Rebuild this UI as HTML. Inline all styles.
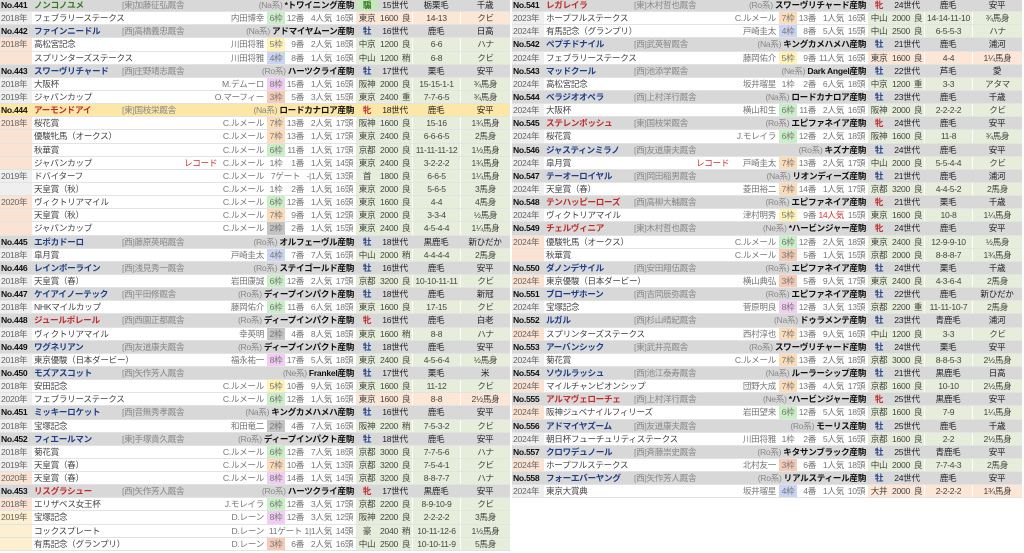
<!DOCTYPE html>
<html><head><meta charset="utf-8">
<style>
*{margin:0;padding:0;box-sizing:border-box}
body{width:1024px;height:553px;overflow:hidden;background:#fff;font-family:"Liberation Sans","Noto Sans CJK JP",sans-serif;font-size:8.6px;color:#555;letter-spacing:-0.3px}
.t{position:absolute;top:-1px;width:510px}
.r{display:flex;height:13.15px;line-height:12.5px;border-bottom:1px solid #e3e3e3;white-space:nowrap;overflow:hidden}
.r>div{overflow:hidden}
.y{width:32px;background:#efefef;color:#666;padding-left:1px}
.y.o{background:#fbe3d3}
.n{width:235px;display:flex;justify-content:space-between;padding:0 3px 0 2px;color:#444}
.n i{font-style:normal;color:#c33;position:absolute;margin-left:150px}
.n em{font-style:normal;color:#777}
.w{width:18px;text-align:center;color:#777}
.b{width:19px;text-align:right;color:#777}
.p{width:28px;text-align:right;color:#777}
.h{width:23px;text-align:right;color:#777;padding-right:2px}
.z{display:flex;background:#e6eedb;border-left:1px solid #fff}
.z.dt{background:#fce6d6}
.c{width:22px;text-align:center;color:#444}
.d{width:22px;text-align:center;color:#444}
.k{width:12px;text-align:center;color:#444}
.s{width:48px;text-align:center;color:#444;border-left:1px solid #fff}
.m{width:50px;text-align:center;color:#444;border-left:1px solid #fff}
.H{background:#d8d8d8}
.H.A{background:#fce7a6}
.no{width:32px;font-weight:bold;color:#111;padding-left:1px}
.hn{width:90px;font-weight:bold;padding-left:2px}
.M{color:#1d3f8a}.F{color:#c42a2a}.G{color:#2e7d1e}
.tr{flex:1;color:#888;position:relative}
.tr b{font-weight:normal;position:absolute;left:-18px}
.sr{text-align:right;padding-right:2px;color:#111;font-weight:bold}
.sr span{font-weight:normal;color:#888}
.sx{width:22px;text-align:center;font-weight:bold}
.g{width:34px;text-align:center;color:#222}
.co{width:48px;text-align:center;color:#222}
.bp{width:50px;text-align:center;color:#222}
.hz{display:flex}
.w1{background:#fff}.w2{background:#c4c4c4}.w3{background:#f6cbb5}.w4{background:#c9d5f2}.w5{background:#fff3b5}.w6{background:#c9efc6}.w7{background:#fbdcb8}.w8{background:#f1cdf4}
.gx{width:37px;text-align:center;color:#777}
</style></head><body>

<div class="t" style="left:0">
<div class="r H"><div class="no">No.441</div><div class="hn G">ノンコノユメ</div><div class="tr">[東]加藤征弘厩舎</div><div class="sr"><span>(Na系)</span> *トワイニング産駒</div><div class="hz"><div class="sx G" style="background:#c8e6c0">騸</div><div class="g">15世代</div><div class="co">栃栗毛</div><div class="bp">千歳</div></div></div>
<div class="r"><div class="y">2018年</div><div class="n">フェブラリーステークス<em>内田博幸</em></div><div class="w w6">6枠</div><div class="b">12番</div><div class="p">4人気</div><div class="h">16頭</div><div class="z dt"><div class="c">東京</div><div class="d">1600</div><div class="k">良</div><div class="s">14-13</div><div class="m">クビ</div></div></div>
<div class="r H"><div class="no">No.442</div><div class="hn M">ファインニードル</div><div class="tr">[西]高橋義忠厩舎</div><div class="sr"><span>(Na系)</span> アドマイヤムーン産駒</div><div class="hz"><div class="sx M">牡</div><div class="g">16世代</div><div class="co">鹿毛</div><div class="bp">日高</div></div></div>
<div class="r"><div class="y o">2018年</div><div class="n">高松宮記念<em>川田将雅</em></div><div class="w w5">5枠</div><div class="b">9番</div><div class="p">2人気</div><div class="h">18頭</div><div class="z"><div class="c">中京</div><div class="d">1200</div><div class="k">良</div><div class="s">6-6</div><div class="m">ハナ</div></div></div>
<div class="r"><div class="y o"></div><div class="n">スプリンターズステークス<em>川田将雅</em></div><div class="w w4">4枠</div><div class="b">8番</div><div class="p">1人気</div><div class="h">16頭</div><div class="z"><div class="c">中山</div><div class="d">1200</div><div class="k">稍</div><div class="s">6-8</div><div class="m">クビ</div></div></div>
<div class="r H"><div class="no">No.443</div><div class="hn M">スワーヴリチャード</div><div class="tr">[西]庄野靖志厩舎</div><div class="sr"><span>(Ro系)</span> ハーツクライ産駒</div><div class="hz"><div class="sx M">牡</div><div class="g">17世代</div><div class="co">栗毛</div><div class="bp">安平</div></div></div>
<div class="r"><div class="y">2018年</div><div class="n">大阪杯<em>M.デムーロ</em></div><div class="w w8">8枠</div><div class="b">15番</div><div class="p">1人気</div><div class="h">16頭</div><div class="z"><div class="c">阪神</div><div class="d">2000</div><div class="k">良</div><div class="s">15-15-1-1</div><div class="m">¾馬身</div></div></div>
<div class="r"><div class="y">2019年</div><div class="n">ジャパンカップ<em>O.マーフィー</em></div><div class="w w3">3枠</div><div class="b">5番</div><div class="p">3人気</div><div class="h">15頭</div><div class="z"><div class="c">東京</div><div class="d">2400</div><div class="k">重</div><div class="s">7-7-6-5</div><div class="m">¾馬身</div></div></div>
<div class="r H A"><div class="no">No.444</div><div class="hn F">アーモンドアイ</div><div class="tr">[東]国枝栄厩舎</div><div class="sr"><span>(Na系)</span> ロードカナロア産駒</div><div class="hz"><div class="sx F">牝</div><div class="g">18世代</div><div class="co">鹿毛</div><div class="bp">安平</div></div></div>
<div class="r"><div class="y o">2018年</div><div class="n">桜花賞<em>C.ルメール</em></div><div class="w w7">7枠</div><div class="b">13番</div><div class="p">2人気</div><div class="h">17頭</div><div class="z"><div class="c">阪神</div><div class="d">1600</div><div class="k">良</div><div class="s">15-16</div><div class="m">1¾馬身</div></div></div>
<div class="r"><div class="y o"></div><div class="n">優駿牝馬（オークス）<em>C.ルメール</em></div><div class="w w7">7枠</div><div class="b">13番</div><div class="p">1人気</div><div class="h">17頭</div><div class="z"><div class="c">東京</div><div class="d">2400</div><div class="k">良</div><div class="s">6-6-6-5</div><div class="m">2馬身</div></div></div>
<div class="r"><div class="y o"></div><div class="n">秋華賞<em>C.ルメール</em></div><div class="w w6">6枠</div><div class="b">11番</div><div class="p">1人気</div><div class="h">17頭</div><div class="z"><div class="c">京都</div><div class="d">2000</div><div class="k">良</div><div class="s">11-11-11-12</div><div class="m">1½馬身</div></div></div>
<div class="r"><div class="y o"></div><div class="n">ジャパンカップ<i>レコード</i><em>C.ルメール</em></div><div class="w w1">1枠</div><div class="b">1番</div><div class="p">1人気</div><div class="h">14頭</div><div class="z"><div class="c">東京</div><div class="d">2400</div><div class="k">良</div><div class="s">3-2-2-2</div><div class="m">1¾馬身</div></div></div>
<div class="r"><div class="y">2019年</div><div class="n">ドバイターフ<em>C.ルメール</em></div><div class="gx">7ゲート</div><div class="p">-|1人気</div><div class="h">13頭</div><div class="z"><div class="c">首</div><div class="d">1800</div><div class="k">良</div><div class="s">6-6-5</div><div class="m">1¼馬身</div></div></div>
<div class="r"><div class="y"></div><div class="n">天皇賞（秋）<em>C.ルメール</em></div><div class="w w1">1枠</div><div class="b">2番</div><div class="p">1人気</div><div class="h">16頭</div><div class="z"><div class="c">東京</div><div class="d">2000</div><div class="k">良</div><div class="s">5-6-5</div><div class="m">3馬身</div></div></div>
<div class="r"><div class="y o">2020年</div><div class="n">ヴィクトリアマイル<em>C.ルメール</em></div><div class="w w6">6枠</div><div class="b">12番</div><div class="p">1人気</div><div class="h">16頭</div><div class="z"><div class="c">東京</div><div class="d">1600</div><div class="k">良</div><div class="s">4-4</div><div class="m">4馬身</div></div></div>
<div class="r"><div class="y o"></div><div class="n">天皇賞（秋）<em>C.ルメール</em></div><div class="w w7">7枠</div><div class="b">9番</div><div class="p">1人気</div><div class="h">12頭</div><div class="z"><div class="c">東京</div><div class="d">2000</div><div class="k">良</div><div class="s">3-3-4</div><div class="m">½馬身</div></div></div>
<div class="r"><div class="y o"></div><div class="n">ジャパンカップ<em>C.ルメール</em></div><div class="w w2">2枠</div><div class="b">2番</div><div class="p">1人気</div><div class="h">15頭</div><div class="z"><div class="c">東京</div><div class="d">2400</div><div class="k">良</div><div class="s">4-5-4-4</div><div class="m">1¼馬身</div></div></div>
<div class="r H"><div class="no">No.445</div><div class="hn M">エポカドーロ</div><div class="tr">[西]藤原英昭厩舎</div><div class="sr"><span>(Ro系)</span> オルフェーヴル産駒</div><div class="hz"><div class="sx M">牡</div><div class="g">18世代</div><div class="co">黒鹿毛</div><div class="bp">新ひだか</div></div></div>
<div class="r"><div class="y">2018年</div><div class="n">皐月賞<em>戸崎圭太</em></div><div class="w w4">4枠</div><div class="b">7番</div><div class="p">7人気</div><div class="h">16頭</div><div class="z"><div class="c">中山</div><div class="d">2000</div><div class="k">稍</div><div class="s">4-4-4-4</div><div class="m">2馬身</div></div></div>
<div class="r H"><div class="no">No.446</div><div class="hn M">レインボーライン</div><div class="tr">[西]浅見秀一厩舎</div><div class="sr"><span>(Ro系)</span> ステイゴールド産駒</div><div class="hz"><div class="sx M">牡</div><div class="g">16世代</div><div class="co">鹿毛</div><div class="bp">安平</div></div></div>
<div class="r"><div class="y">2018年</div><div class="n">天皇賞（春）<em>岩田康誠</em></div><div class="w w6">6枠</div><div class="b">12番</div><div class="p">2人気</div><div class="h">17頭</div><div class="z"><div class="c">京都</div><div class="d">3200</div><div class="k">良</div><div class="s">10-10-11-11</div><div class="m">クビ</div></div></div>
<div class="r H"><div class="no">No.447</div><div class="hn M">ケイアイノーテック</div><div class="tr">[西]平田修厩舎</div><div class="sr"><span>(Ro系)</span> ディープインパクト産駒</div><div class="hz"><div class="sx M">牡</div><div class="g">18世代</div><div class="co">鹿毛</div><div class="bp">新冠</div></div></div>
<div class="r"><div class="y">2018年</div><div class="n">NHKマイルカップ<em>藤岡佑介</em></div><div class="w w6">6枠</div><div class="b">11番</div><div class="p">6人気</div><div class="h">18頭</div><div class="z"><div class="c">東京</div><div class="d">1600</div><div class="k">良</div><div class="s">17-15</div><div class="m">クビ</div></div></div>
<div class="r H"><div class="no">No.448</div><div class="hn F">ジュールポレール</div><div class="tr">[西]西園正都厩舎</div><div class="sr"><span>(Ro系)</span> ディープインパクト産駒</div><div class="hz"><div class="sx F">牝</div><div class="g">16世代</div><div class="co">鹿毛</div><div class="bp">白老</div></div></div>
<div class="r"><div class="y">2018年</div><div class="n">ヴィクトリアマイル<em>幸英明</em></div><div class="w w2">2枠</div><div class="b">4番</div><div class="p">8人気</div><div class="h">18頭</div><div class="z"><div class="c">東京</div><div class="d">1600</div><div class="k">稍</div><div class="s">8-8</div><div class="m">ハナ</div></div></div>
<div class="r H"><div class="no">No.449</div><div class="hn M">ワグネリアン</div><div class="tr">[西]友道康夫厩舎</div><div class="sr"><span>(Ro系)</span> ディープインパクト産駒</div><div class="hz"><div class="sx M">牡</div><div class="g">18世代</div><div class="co">鹿毛</div><div class="bp">安平</div></div></div>
<div class="r"><div class="y">2018年</div><div class="n">東京優駿（日本ダービー）<em>福永祐一</em></div><div class="w w8">8枠</div><div class="b">17番</div><div class="p">5人気</div><div class="h">18頭</div><div class="z"><div class="c">東京</div><div class="d">2400</div><div class="k">良</div><div class="s">4-5-6-4</div><div class="m">½馬身</div></div></div>
<div class="r H"><div class="no">No.450</div><div class="hn M">モズアスコット</div><div class="tr"><b>(外)</b>[西]矢作芳人厩舎</div><div class="sr"><span>(Ne系)</span> Frankel産駒</div><div class="hz"><div class="sx M">牡</div><div class="g">17世代</div><div class="co">栗毛</div><div class="bp">米</div></div></div>
<div class="r"><div class="y">2018年</div><div class="n">安田記念<em>C.ルメール</em></div><div class="w w5">5枠</div><div class="b">10番</div><div class="p">9人気</div><div class="h">16頭</div><div class="z"><div class="c">東京</div><div class="d">1600</div><div class="k">良</div><div class="s">11-12</div><div class="m">クビ</div></div></div>
<div class="r"><div class="y">2020年</div><div class="n">フェブラリーステークス<em>C.ルメール</em></div><div class="w w6">6枠</div><div class="b">12番</div><div class="p">1人気</div><div class="h">16頭</div><div class="z dt"><div class="c">東京</div><div class="d">1600</div><div class="k">良</div><div class="s">8-8</div><div class="m">2½馬身</div></div></div>
<div class="r H"><div class="no">No.451</div><div class="hn M">ミッキーロケット</div><div class="tr">[西]音無秀孝厩舎</div><div class="sr"><span>(Na系)</span> キングカメハメハ産駒</div><div class="hz"><div class="sx M">牡</div><div class="g">16世代</div><div class="co">鹿毛</div><div class="bp">安平</div></div></div>
<div class="r"><div class="y">2018年</div><div class="n">宝塚記念<em>和田竜二</em></div><div class="w w2">2枠</div><div class="b">4番</div><div class="p">7人気</div><div class="h">16頭</div><div class="z"><div class="c">阪神</div><div class="d">2200</div><div class="k">稍</div><div class="s">7-5-3-2</div><div class="m">クビ</div></div></div>
<div class="r H"><div class="no">No.452</div><div class="hn M">フィエールマン</div><div class="tr">[東]手塚貴久厩舎</div><div class="sr"><span>(Ro系)</span> ディープインパクト産駒</div><div class="hz"><div class="sx M">牡</div><div class="g">18世代</div><div class="co">鹿毛</div><div class="bp">安平</div></div></div>
<div class="r"><div class="y">2018年</div><div class="n">菊花賞<em>C.ルメール</em></div><div class="w w6">6枠</div><div class="b">12番</div><div class="p">7人気</div><div class="h">18頭</div><div class="z"><div class="c">京都</div><div class="d">3000</div><div class="k">良</div><div class="s">7-7-5-6</div><div class="m">ハナ</div></div></div>
<div class="r"><div class="y">2019年</div><div class="n">天皇賞（春）<em>C.ルメール</em></div><div class="w w7">7枠</div><div class="b">10番</div><div class="p">1人気</div><div class="h">13頭</div><div class="z"><div class="c">京都</div><div class="d">3200</div><div class="k">良</div><div class="s">7-5-4-1</div><div class="m">クビ</div></div></div>
<div class="r"><div class="y o">2020年</div><div class="n">天皇賞（春）<em>C.ルメール</em></div><div class="w w8">8枠</div><div class="b">14番</div><div class="p">1人気</div><div class="h">14頭</div><div class="z"><div class="c">京都</div><div class="d">3200</div><div class="k">良</div><div class="s">8-8-7-7</div><div class="m">ハナ</div></div></div>
<div class="r H"><div class="no">No.453</div><div class="hn F">リスグラシュー</div><div class="tr">[西]矢作芳人厩舎</div><div class="sr"><span>(Ro系)</span> ハーツクライ産駒</div><div class="hz"><div class="sx F">牝</div><div class="g">17世代</div><div class="co">黒鹿毛</div><div class="bp">安平</div></div></div>
<div class="r"><div class="y o">2018年</div><div class="n">エリザベス女王杯<em>J.モレイラ</em></div><div class="w w6">6枠</div><div class="b">12番</div><div class="p">3人気</div><div class="h">17頭</div><div class="z"><div class="c">京都</div><div class="d">2200</div><div class="k">良</div><div class="s">8-9-10-9</div><div class="m">クビ</div></div></div>
<div class="r"><div class="y o" style="background:#fdf0d0">2019年</div><div class="n">宝塚記念<em>D.レーン</em></div><div class="w w8">8枠</div><div class="b">12番</div><div class="p">3人気</div><div class="h">12頭</div><div class="z"><div class="c">阪神</div><div class="d">2200</div><div class="k">良</div><div class="s">2-2-2-2</div><div class="m">3馬身</div></div></div>
<div class="r"><div class="y o" style="background:#fdf0d0"></div><div class="n">コックスプレート<em>D.レーン</em></div><div class="gx">11ゲート</div><div class="p">1|1人気</div><div class="h">14頭</div><div class="z"><div class="c">豪</div><div class="d">2040</div><div class="k">稍</div><div class="s">10-11-12-6</div><div class="m">1½馬身</div></div></div>
<div class="r"><div class="y o" style="background:#fdf0d0"></div><div class="n">有馬記念（グランプリ）<em>D.レーン</em></div><div class="w w3">3枠</div><div class="b">6番</div><div class="p">2人気</div><div class="h">16頭</div><div class="z"><div class="c">中山</div><div class="d">2500</div><div class="k">良</div><div class="s">10-10-11-9</div><div class="m">5馬身</div></div></div>
</div>

<div class="t" style="left:512px">
<div class="r H"><div class="no">No.541</div><div class="hn F">レガレイラ</div><div class="tr">[東]木村哲也厩舎</div><div class="sr"><span>(Ro系)</span> スワーヴリチャード産駒</div><div class="hz"><div class="sx F">牝</div><div class="g">24世代</div><div class="co">鹿毛</div><div class="bp">安平</div></div></div>
<div class="r"><div class="y">2023年</div><div class="n">ホープフルステークス<em>C.ルメール</em></div><div class="w w7">7枠</div><div class="b">13番</div><div class="p">1人気</div><div class="h">16頭</div><div class="z"><div class="c">中山</div><div class="d">2000</div><div class="k">良</div><div class="s">14-14-11-10</div><div class="m">¾馬身</div></div></div>
<div class="r"><div class="y">2024年</div><div class="n">有馬記念（グランプリ）<em>戸崎圭太</em></div><div class="w w4">4枠</div><div class="b">8番</div><div class="p">5人気</div><div class="h">15頭</div><div class="z"><div class="c">中山</div><div class="d">2500</div><div class="k">良</div><div class="s">6-5-5-3</div><div class="m">ハナ</div></div></div>
<div class="r H"><div class="no">No.542</div><div class="hn M">ペプチドナイル</div><div class="tr">[西]武英智厩舎</div><div class="sr"><span>(Na系)</span> キングカメハメハ産駒</div><div class="hz"><div class="sx M">牡</div><div class="g">21世代</div><div class="co">鹿毛</div><div class="bp">浦河</div></div></div>
<div class="r"><div class="y">2024年</div><div class="n">フェブラリーステークス<em>藤岡佑介</em></div><div class="w w5">5枠</div><div class="b">9番</div><div class="p">11人気</div><div class="h">16頭</div><div class="z dt"><div class="c">東京</div><div class="d">1600</div><div class="k">良</div><div class="s">4-4</div><div class="m">1¼馬身</div></div></div>
<div class="r H"><div class="no">No.543</div><div class="hn M">マッドクール</div><div class="tr"><b>(外)</b>[西]池添学厩舎</div><div class="sr"><span>(Ne系)</span> Dark Angel産駒</div><div class="hz"><div class="sx M">牡</div><div class="g">22世代</div><div class="co">芦毛</div><div class="bp">愛</div></div></div>
<div class="r"><div class="y">2024年</div><div class="n">高松宮記念<em>坂井瑠星</em></div><div class="w w1">1枠</div><div class="b">2番</div><div class="p">6人気</div><div class="h">18頭</div><div class="z"><div class="c">中京</div><div class="d">1200</div><div class="k">重</div><div class="s">3-3</div><div class="m">アタマ</div></div></div>
<div class="r H"><div class="no">No.544</div><div class="hn M">ベラジオオペラ</div><div class="tr">[西]上村洋行厩舎</div><div class="sr"><span>(Na系)</span> ロードカナロア産駒</div><div class="hz"><div class="sx M">牡</div><div class="g">23世代</div><div class="co">鹿毛</div><div class="bp">千歳</div></div></div>
<div class="r"><div class="y">2024年</div><div class="n">大阪杯<em>横山和生</em></div><div class="w w6">6枠</div><div class="b">11番</div><div class="p">2人気</div><div class="h">16頭</div><div class="z"><div class="c">阪神</div><div class="d">2000</div><div class="k">良</div><div class="s">2-2-2-2</div><div class="m">クビ</div></div></div>
<div class="r H"><div class="no">No.545</div><div class="hn F">ステレンボッシュ</div><div class="tr">[東]国枝栄厩舎</div><div class="sr"><span>(Ro系)</span> エピファネイア産駒</div><div class="hz"><div class="sx F">牝</div><div class="g">24世代</div><div class="co">鹿毛</div><div class="bp">安平</div></div></div>
<div class="r"><div class="y">2024年</div><div class="n">桜花賞<em>J.モレイラ</em></div><div class="w w6">6枠</div><div class="b">12番</div><div class="p">2人気</div><div class="h">18頭</div><div class="z"><div class="c">阪神</div><div class="d">1600</div><div class="k">良</div><div class="s">11-8</div><div class="m">¾馬身</div></div></div>
<div class="r H"><div class="no">No.546</div><div class="hn M">ジャスティンミラノ</div><div class="tr">[西]友道康夫厩舎</div><div class="sr"><span>(Ro系)</span> キズナ産駒</div><div class="hz"><div class="sx M">牡</div><div class="g">24世代</div><div class="co">鹿毛</div><div class="bp">安平</div></div></div>
<div class="r"><div class="y">2024年</div><div class="n">皐月賞<i>レコード</i><em>戸崎圭太</em></div><div class="w w7">7枠</div><div class="b">13番</div><div class="p">2人気</div><div class="h">17頭</div><div class="z"><div class="c">中山</div><div class="d">2000</div><div class="k">良</div><div class="s">5-5-4-4</div><div class="m">クビ</div></div></div>
<div class="r H"><div class="no">No.547</div><div class="hn M">テーオーロイヤル</div><div class="tr">[西]岡田稲男厩舎</div><div class="sr"><span>(Na系)</span> リオンディーズ産駒</div><div class="hz"><div class="sx M">牡</div><div class="g">21世代</div><div class="co">鹿毛</div><div class="bp">浦河</div></div></div>
<div class="r"><div class="y">2024年</div><div class="n">天皇賞（春）<em>菱田裕二</em></div><div class="w w7">7枠</div><div class="b">14番</div><div class="p">1人気</div><div class="h">17頭</div><div class="z"><div class="c">京都</div><div class="d">3200</div><div class="k">良</div><div class="s">4-4-5-2</div><div class="m">2馬身</div></div></div>
<div class="r H"><div class="no">No.548</div><div class="hn F">テンハッピーローズ</div><div class="tr">[西]高柳大輔厩舎</div><div class="sr"><span>(Ro系)</span> エピファネイア産駒</div><div class="hz"><div class="sx F">牝</div><div class="g">21世代</div><div class="co">栗毛</div><div class="bp">千歳</div></div></div>
<div class="r"><div class="y">2024年</div><div class="n">ヴィクトリアマイル<em>津村明秀</em></div><div class="w w5">5枠</div><div class="b">9番</div><div class="p" style="color:#d33">14人気</div><div class="h">15頭</div><div class="z"><div class="c">東京</div><div class="d">1600</div><div class="k">良</div><div class="s">10-8</div><div class="m">1¼馬身</div></div></div>
<div class="r H"><div class="no">No.549</div><div class="hn F">チェルヴィニア</div><div class="tr">[東]木村哲也厩舎</div><div class="sr"><span>(Ne系)</span> *ハービンジャー産駒</div><div class="hz"><div class="sx F">牝</div><div class="g">24世代</div><div class="co">鹿毛</div><div class="bp">安平</div></div></div>
<div class="r"><div class="y o">2024年</div><div class="n">優駿牝馬（オークス）<em>C.ルメール</em></div><div class="w w6">6枠</div><div class="b">12番</div><div class="p">2人気</div><div class="h">18頭</div><div class="z"><div class="c">東京</div><div class="d">2400</div><div class="k">良</div><div class="s">12-9-9-10</div><div class="m">½馬身</div></div></div>
<div class="r"><div class="y o"></div><div class="n">秋華賞<em>C.ルメール</em></div><div class="w w3">3枠</div><div class="b">5番</div><div class="p">1人気</div><div class="h">15頭</div><div class="z"><div class="c">京都</div><div class="d">2000</div><div class="k">良</div><div class="s">8-8-8-7</div><div class="m">1¾馬身</div></div></div>
<div class="r H"><div class="no">No.550</div><div class="hn M">ダノンデサイル</div><div class="tr">[西]安田翔伍厩舎</div><div class="sr"><span>(Ro系)</span> エピファネイア産駒</div><div class="hz"><div class="sx M">牡</div><div class="g">24世代</div><div class="co">栗毛</div><div class="bp">千歳</div></div></div>
<div class="r"><div class="y o">2024年</div><div class="n">東京優駿（日本ダービー）<em>横山典弘</em></div><div class="w w3">3枠</div><div class="b">5番</div><div class="p">9人気</div><div class="h">17頭</div><div class="z"><div class="c">東京</div><div class="d">2400</div><div class="k">良</div><div class="s">4-3-6-4</div><div class="m">2馬身</div></div></div>
<div class="r H"><div class="no">No.551</div><div class="hn M">ブローザホーン</div><div class="tr">[西]吉岡辰弥厩舎</div><div class="sr"><span>(Ro系)</span> エピファネイア産駒</div><div class="hz"><div class="sx M">牡</div><div class="g">22世代</div><div class="co">鹿毛</div><div class="bp">新ひだか</div></div></div>
<div class="r"><div class="y">2024年</div><div class="n">宝塚記念<em>菅原明良</em></div><div class="w w8">8枠</div><div class="b">12番</div><div class="p">3人気</div><div class="h">13頭</div><div class="z"><div class="c">京都</div><div class="d">2200</div><div class="k">重</div><div class="s">11-11-10-7</div><div class="m">2馬身</div></div></div>
<div class="r H"><div class="no">No.552</div><div class="hn M">ルガル</div><div class="tr">[西]杉山晴紀厩舎</div><div class="sr"><span>(Na系)</span> ドゥラメンテ産駒</div><div class="hz"><div class="sx M">牡</div><div class="g">23世代</div><div class="co">青鹿毛</div><div class="bp">浦河</div></div></div>
<div class="r"><div class="y o">2024年</div><div class="n">スプリンターズステークス<em>西村淳也</em></div><div class="w w7">7枠</div><div class="b">13番</div><div class="p">9人気</div><div class="h">16頭</div><div class="z"><div class="c">中山</div><div class="d">1200</div><div class="k">良</div><div class="s">3-3</div><div class="m">クビ</div></div></div>
<div class="r H"><div class="no">No.553</div><div class="hn M">アーバンシック</div><div class="tr">[東]武井亮厩舎</div><div class="sr"><span>(Ro系)</span> スワーヴリチャード産駒</div><div class="hz"><div class="sx M">牡</div><div class="g">24世代</div><div class="co">栗毛</div><div class="bp">安平</div></div></div>
<div class="r"><div class="y">2024年</div><div class="n">菊花賞<em>C.ルメール</em></div><div class="w w7">7枠</div><div class="b">13番</div><div class="p">2人気</div><div class="h">18頭</div><div class="z"><div class="c">京都</div><div class="d">3000</div><div class="k">良</div><div class="s">8-8-5-3</div><div class="m">2½馬身</div></div></div>
<div class="r H"><div class="no">No.554</div><div class="hn M">ソウルラッシュ</div><div class="tr">[西]池江泰寿厩舎</div><div class="sr"><span>(Na系)</span> ルーラーシップ産駒</div><div class="hz"><div class="sx M">牡</div><div class="g">21世代</div><div class="co">黒鹿毛</div><div class="bp">日高</div></div></div>
<div class="r"><div class="y o">2024年</div><div class="n">マイルチャンピオンシップ<em>団野大成</em></div><div class="w w7">7枠</div><div class="b">13番</div><div class="p">4人気</div><div class="h">17頭</div><div class="z"><div class="c">京都</div><div class="d">1600</div><div class="k">良</div><div class="s">10-10</div><div class="m">2½馬身</div></div></div>
<div class="r H"><div class="no">No.555</div><div class="hn F">アルマヴェローチェ</div><div class="tr">[西]上村洋行厩舎</div><div class="sr"><span>(Ne系)</span> *ハービンジャー産駒</div><div class="hz"><div class="sx F">牝</div><div class="g">25世代</div><div class="co">黒鹿毛</div><div class="bp">安平</div></div></div>
<div class="r"><div class="y o">2024年</div><div class="n">阪神ジュベナイルフィリーズ<em>岩田望来</em></div><div class="w w6">6枠</div><div class="b">12番</div><div class="p">5人気</div><div class="h">18頭</div><div class="z"><div class="c">京都</div><div class="d">1600</div><div class="k">良</div><div class="s">7-9</div><div class="m">1¼馬身</div></div></div>
<div class="r H"><div class="no">No.556</div><div class="hn M">アドマイヤズーム</div><div class="tr">[西]友道康夫厩舎</div><div class="sr"><span>(Ro系)</span> モーリス産駒</div><div class="hz"><div class="sx M">牡</div><div class="g">25世代</div><div class="co">鹿毛</div><div class="bp">千歳</div></div></div>
<div class="r"><div class="y">2024年</div><div class="n">朝日杯フューチュリティステークス<em>川田将雅</em></div><div class="w w1">1枠</div><div class="b">2番</div><div class="p">5人気</div><div class="h">16頭</div><div class="z"><div class="c">京都</div><div class="d">1600</div><div class="k">良</div><div class="s">2-2</div><div class="m">2½馬身</div></div></div>
<div class="r H"><div class="no">No.557</div><div class="hn M">クロワデュノール</div><div class="tr">[西]斉藤崇史厩舎</div><div class="sr"><span>(Ro系)</span> キタサンブラック産駒</div><div class="hz"><div class="sx M">牡</div><div class="g">25世代</div><div class="co">青鹿毛</div><div class="bp">安平</div></div></div>
<div class="r"><div class="y o">2024年</div><div class="n">ホープフルステークス<em>北村友一</em></div><div class="w w3">3枠</div><div class="b">6番</div><div class="p">1人気</div><div class="h">18頭</div><div class="z"><div class="c">中山</div><div class="d">2000</div><div class="k">良</div><div class="s">7-7-4-3</div><div class="m">2馬身</div></div></div>
<div class="r H"><div class="no">No.558</div><div class="hn M">フォーエバーヤング</div><div class="tr">[西]矢作芳人厩舎</div><div class="sr"><span>(Ro系)</span> リアルスティール産駒</div><div class="hz"><div class="sx M">牡</div><div class="g">24世代</div><div class="co">鹿毛</div><div class="bp">安平</div></div></div>
<div class="r"><div class="y">2024年</div><div class="n">東京大賞典<em>坂井瑠星</em></div><div class="w w4">4枠</div><div class="b">4番</div><div class="p">1人気</div><div class="h">10頭</div><div class="z dt"><div class="c">大井</div><div class="d">2000</div><div class="k">良</div><div class="s">2-2-2-2</div><div class="m">1¾馬身</div></div></div>
</div>
</body></html>
